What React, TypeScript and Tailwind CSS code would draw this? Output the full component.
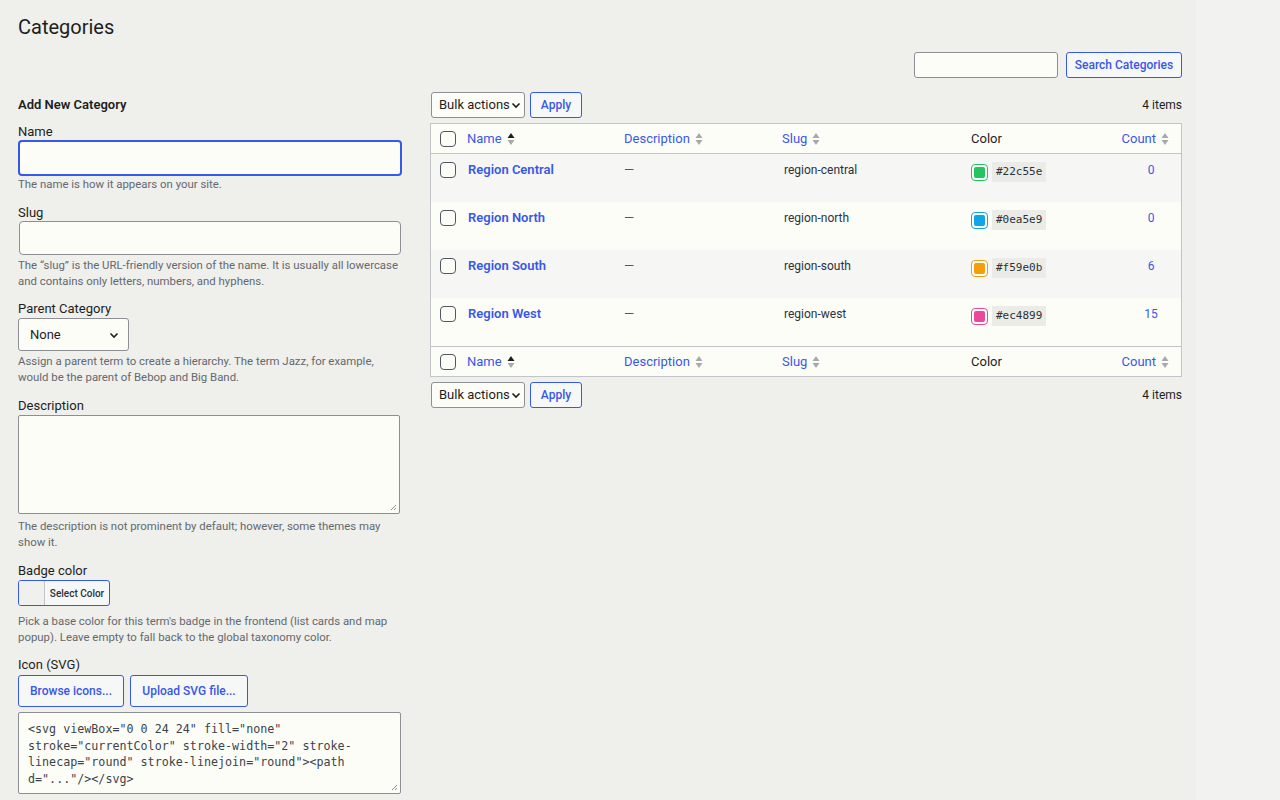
import React from 'react';

const terms = [
  { name: 'Region Central', slug: 'region-central', color: '#22c55e', count: 0 },
  { name: 'Region North', slug: 'region-north', color: '#0ea5e9', count: 0 },
  { name: 'Region South', slug: 'region-south', color: '#f59e0b', count: 6 },
  { name: 'Region West', slug: 'region-west', color: '#ec4899', count: 15 },
];

const cols = 'grid grid-cols-[36px_157px_158px_189px_146px_1fr]';

function SortArrows({ active }: { active?: boolean }) {
  return (
    <svg width="8" height="14" viewBox="0 0 8 14" className="ml-[5px] shrink-0">
      <path d="M4 1 L7.5 6 L0.5 6 Z" fill={active ? '#1e1e1e' : '#a7aaad'} />
      <path d="M4 13 L7.5 8 L0.5 8 Z" fill="#a7aaad" />
    </svg>
  );
}

function Chevron() {
  return (
    <svg width="12" height="12" viewBox="0 0 12 12" className="shrink-0">
      <path d="M2.5 4.5 L6 8 L9.5 4.5" fill="none" stroke="#1e1e1e" strokeWidth="1.6" />
    </svg>
  );
}

function Checkbox() {
  return <span className="block w-4 h-4 rounded-[4px] border border-[#50575e] bg-[#fdfdf8]" />;
}

function Grip() {
  return (
    <svg width="8" height="8" viewBox="0 0 8 8" className="absolute right-[2px] bottom-[2px]">
      <path d="M7 2 L2 7 M7 5 L5 7" stroke="#8c8f94" strokeWidth="1" />
    </svg>
  );
}

function BulkRow() {
  return (
    <div className="flex items-center h-[26px]">
      <div className="ml-px w-[94px] h-[26px] flex items-center justify-between whitespace-nowrap pl-[7px] pr-[6px] border border-[#8c8f94] rounded-[3px] bg-[#fdfdf8] text-[13px] text-[#1e1e1e]">
        Bulk actions
        <Chevron />
      </div>
      <button className="ml-[5px] w-[52px] h-[26px] border border-[#3858e9] rounded-[3px] bg-[#f6f7f7] text-[12px] font-medium text-[#3858e9]">
        Apply
      </button>
      <div className="ml-auto text-[12px] text-[#1e1e1e]">4 items</div>
    </div>
  );
}

function HeadRow({ top }: { top?: boolean }) {
  return (
    <div className={`${cols} h-[30px] items-center text-[13px] ${top ? 'border-b' : 'border-t'} border-[#c3c4c7]`}>
      <div className="pl-[9px]"><Checkbox /></div>
      <div className="flex items-center text-[#3858e9]">Name<SortArrows active /></div>
      <div className="flex items-center text-[#3858e9]">Description<SortArrows /></div>
      <div className="flex items-center text-[#3858e9]">Slug<SortArrows /></div>
      <div className="text-[#1e1e1e]">Color</div>
      <div className="flex items-center justify-end pr-[12px] text-[#3858e9]">Count<SortArrows /></div>
    </div>
  );
}

const help = 'text-[11.4px] leading-[16px] text-[#646970]';

export default function App() {
  return (
    <div className="min-h-screen flex bg-[#f2f2f0] font-['Roboto','Liberation_Sans',sans-serif] text-[#1e1e1e]">
      <div className="w-[1196px] min-h-screen bg-[#efefeb] pl-[18px] pr-[14px]">
        <h1 className="pt-[14px] text-[20px] leading-[26px] font-normal">Categories</h1>

        <div className="flex justify-end mt-[12px] gap-[8px]">
          <div className="w-[144px] h-[26px] border border-[#8c8f94] rounded-[3px] bg-[#fdfdf8]" />
          <button className="w-[116px] h-[26px] border border-[#3858e9] rounded-[3px] bg-[#f6f7f7] text-[12px] font-medium text-[#3858e9]">
            Search Categories
          </button>
        </div>

        <div className="flex mt-[10px] gap-[28px]">
          {/* left form */}
          <div className="w-[384px] text-[13px]">
            <h2 className="mt-[9px] text-[13px] leading-[16px] font-semibold">Add New Category</h2>

            <div className="mt-[11px] leading-[16px]">Name</div>
            <div className="h-[36px] border-2 border-[#3858e9] rounded-[4px] bg-[#fdfdf8]" />
            <p className={help}>The name is how it appears on your site.</p>

            <div className="mt-[13px] leading-[16px]">Slug</div>
            <div className="h-[34px] mx-px border border-[#8c8f94] rounded-[4px] bg-[#fdfdf8]" />
            <p className={`mt-[2px] ${help}`}>
              The “slug” is the URL-friendly version of the name. It is usually all lowercase and contains only letters, numbers, and hyphens.
            </p>

            <div className="mt-[12px] leading-[16px]">Parent Category</div>
            <div className="mt-px w-[111px] h-[33px] flex items-center justify-between pl-[11px] pr-[8px] border border-[#8c8f94] rounded-[3px] bg-[#fdfdf8] text-[13px]">
              None
              <Chevron />
            </div>
            <p className={`mt-[2px] ${help}`}>
              Assign a parent term to create a hierarchy. The term Jazz, for example, would be the parent of Bebop and Big Band.
            </p>

            <div className="mt-[13px] leading-[16px]">Description</div>
            <div className="relative mt-px h-[99px] w-[382px] border border-[#8c8f94] rounded-[2px] bg-[#fdfdf8]">
              <Grip />
            </div>
            <p className={`mt-[4px] ${help}`}>
              The description is not prominent by default; however, some themes may show it.
            </p>

            <div className="mt-[13px] leading-[16px]">Badge color</div>
            <div className="mt-px w-[92px] h-[26px] flex border border-[#3858e9] rounded-[3px] bg-[#f6f7f7] overflow-hidden">
              <span className="w-[26px] h-full border-r border-[#c3c4c7] bg-[#f0f0ee]" />
              <span className="flex-1 flex items-center justify-center text-[10px] font-medium text-[#2c3338]">Select Color</span>
            </div>
            <p className={`mt-[7px] ${help}`}>
              Pick a base color for this term's badge in the frontend (list cards and map popup). Leave empty to fall back to the global taxonomy color.
            </p>

            <div className="mt-[12px] leading-[16px]">Icon (SVG)</div>
            <div className="mt-[2px] flex gap-[6px]">
              <button className="w-[106px] h-[32px] border border-[#3858e9] rounded-[3px] bg-[#f6f7f7] text-[12px] font-medium text-[#3858e9]">
                Browse icons...
              </button>
              <button className="w-[118px] h-[32px] border border-[#3858e9] rounded-[3px] bg-[#f6f7f7] text-[12px] font-medium text-[#3858e9]">
                Upload SVG file...
              </button>
            </div>
            <div className="relative mt-[5px] h-[82px] w-[383px] border border-[#8c8f94] rounded-[2px] bg-[#fdfdf8] pt-[8px] pl-[9px] pr-[20px] font-['DejaVu_Sans_Mono',monospace] text-[11.7px] leading-[16.5px] text-[#3c434a]">
              {'<svg viewBox="0 0 24 24" fill="none" stroke="currentColor" stroke-width="2" stroke-linecap="round" stroke-linejoin="round"><path d="..."/></svg>'}
              <Grip />
            </div>
          </div>

          {/* right table */}
          <div className="w-[752px] pt-[4px]">
            <BulkRow />
            <div className="mt-[5px] border border-[#c3c4c7] bg-[#fdfdf8]">
              <HeadRow top />
              {terms.map((t, i) => (
                <div key={t.slug} className={`${cols} h-[48px] items-start pt-[7px] text-[13px] ${i % 2 === 0 ? 'bg-[#f6f6f4]' : 'bg-[#fdfdf8]'}`}>
                  <div className="pl-[9px] pt-[1px]"><Checkbox /></div>
                  <div className="pl-px font-semibold text-[#3858e9] leading-[18px]">{t.name}</div>
                  <div className="text-[#50575e] leading-[18px]">—</div>
                  <div className="pl-[2px] text-[12px] text-[#2c3338] leading-[18px]">{t.slug}</div>
                  <div className="flex items-center gap-[4px] pt-[1px]">
                    <span className="w-[17px] h-[17px] rounded-[4px] border bg-white p-[2px]" style={{ borderColor: t.color }}>
                      <span className="block w-full h-full rounded-[2px]" style={{ backgroundColor: t.color }} />
                    </span>
                    <code className="px-[4px] py-[1px] bg-[#ebebe7] font-['DejaVu_Sans_Mono',monospace] text-[11px] text-[#2c3338] leading-[18px]">{t.color}</code>
                  </div>
                  <div className="text-center pl-[4px] text-[12px] text-[#3858e9] leading-[18px]">{t.count}</div>
                </div>
              ))}
              <HeadRow />
            </div>
            <div className="mt-[5px]">
              <BulkRow />
            </div>
          </div>
        </div>
      </div>
      <div className="flex-1" />
    </div>
  );
}
